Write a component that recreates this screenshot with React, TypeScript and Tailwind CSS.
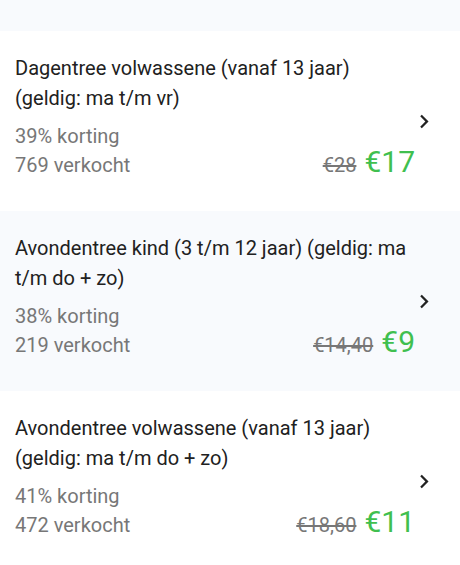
const deals = [
  {
    title: "Dagentree volwassene (vanaf 13 jaar) (geldig: ma t/m vr)",
    discount: "39% korting",
    sold: "769 verkocht",
    oldPrice: "€28",
    price: "€17",
  },
  {
    title: "Avondentree kind (3 t/m 12 jaar) (geldig: ma t/m do + zo)",
    discount: "38% korting",
    sold: "219 verkocht",
    oldPrice: "€14,40",
    price: "€9",
  },
  {
    title: "Avondentree volwassene (vanaf 13 jaar) (geldig: ma t/m do + zo)",
    discount: "41% korting",
    sold: "472 verkocht",
    oldPrice: "€18,60",
    price: "€11",
  },
];

function Chevron() {
  return (
    <svg viewBox="8.4 5.6 8 12.8" className="ml-[5px] h-[15px] w-[9px] shrink-0 text-[#222]" fill="currentColor">
      <path d="M10 6 8.59 7.41 13.17 12l-4.58 4.59L10 18l6-6z" />
    </svg>
  );
}

export default function App() {
  return (
    <div className="min-h-[565px] bg-[#f8fafd] pt-[31px] font-['Roboto',sans-serif]">
      {deals.map((deal, i) => (
        <div
          key={deal.title}
          className={`flex h-[180px] items-center pl-[15px] pr-[31px] ${i % 2 === 0 ? "bg-white" : "bg-[#f8fafd]"}`}
        >
          <div className="min-w-0 flex-1 pb-[10px]">
            <p className="text-[20px] leading-[30px] text-[#212121]">{deal.title}</p>
            <div className="mt-[9px] text-[20px] leading-[29px] text-[#777]">
              <p>{deal.discount}</p>
              <div className="flex h-[29px] items-baseline justify-between">
                <span>{deal.sold}</span>
                <div className="flex items-baseline gap-[8px]">
                  <s>{deal.oldPrice}</s>
                  <span className="text-[30px] leading-[22px] text-[#40bf4f]">{deal.price}</span>
                </div>
              </div>
            </div>
          </div>
          <Chevron />
        </div>
      ))}
    </div>
  );
}
